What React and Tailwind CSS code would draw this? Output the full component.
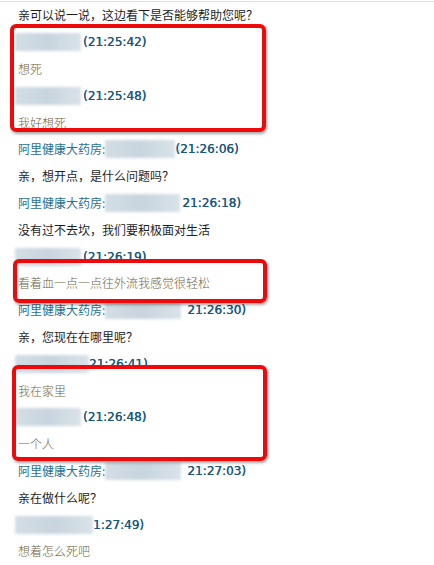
const AGENT = '阿里健康大药房:'

const ROWS = [
  { t: 'agent-msg', text: '亲可以说一说，这边看下是否能够帮助您呢？' },
  { t: 'cust-head', time: '(21:25:42)', blur: 66 },
  { t: 'cust-msg', text: '想死' },
  { t: 'cust-head', time: '(21:25:48)', blur: 66 },
  { t: 'cust-msg', text: '我好想死' },
  { t: 'agent-head', time: '(21:26:06)', blur: 70 },
  { t: 'agent-msg', text: '亲，想开点，是什么问题吗？' },
  { t: 'agent-head', time: '21:26:18)', blur: 75, gap: 2 },
  { t: 'agent-msg', text: '没有过不去坎，我们要积极面对生活' },
  { t: 'cust-head', time: '(21:26:19)', blur: 66 },
  { t: 'cust-msg', text: '看着血一点一点往外流我感觉很轻松' },
  { t: 'agent-head', time: '21:26:30)', blur: 76, gap: 6 },
  { t: 'agent-msg', text: '亲，您现在在哪里呢？' },
  { t: 'cust-head', time: '21:26:41)', blur: 74, gap: 0 },
  { t: 'cust-msg', text: '我在家里' },
  { t: 'cust-head', time: '(21:26:48)', blur: 66 },
  { t: 'cust-msg', text: '一个人' },
  { t: 'agent-head', time: '21:27:03)', blur: 76, gap: 6 },
  { t: 'agent-msg', text: '亲在做什么呢？' },
  { t: 'cust-head', time: '1:27:49)', blur: 78, gap: 0 },
  { t: 'cust-msg', text: '想着怎么死吧' },
]

const sans = "font-['Noto_Sans_CJK_SC',sans-serif]"
const verdana = "font-['DejaVu_Sans',sans-serif]"
const stamp = `text-[12px] text-[#1a587c] ${verdana} [text-shadow:0.35px_0_0_currentColor]`

function Blur({ w }) {
  return (
    <span className="relative inline-block h-[18px] align-middle" style={{ width: w }}>
      <span className="absolute inset-0 bg-gradient-to-r from-[#d3dde4] via-[#c8d5de] to-[#d9e2e8] blur-[1.5px]" />
    </span>
  )
}

function Row({ r }) {
  if (r.t === 'agent-msg') {
    return <div className={`h-[26.8px] flex items-center pl-[18px] text-[12px] text-[#1e1e1e] ${sans}`}>{r.text}</div>
  }
  if (r.t === 'cust-msg') {
    return <div className={`h-[26.8px] flex items-center pl-[18px] text-[12px] text-[#6e6446] ${sans} font-light`}>{r.text}</div>
  }
  if (r.t === 'agent-head') {
    return (
      <div className="h-[26.8px] flex items-center pl-[18px]">
        <span className={`text-[12px] text-[#2a6f93] ${sans}`}>{AGENT}</span>
        <Blur w={r.blur} />
        <span className={stamp} style={{ marginLeft: r.gap ?? 0 }}>{r.time}</span>
      </div>
    )
  }
  return (
    <div className="h-[26.8px] flex items-center pl-[15px]">
      <Blur w={r.blur} />
      <span className={stamp} style={{ marginLeft: r.gap ?? 2 }}>{r.time}</span>
    </div>
  )
}

export default function App() {
  return (
    <div className="relative w-[434px] h-[565px] bg-white overflow-hidden">
      <div className="h-[2px] border-b border-[#e2e2dc]" />
      <div>
        {ROWS.map((r, i) => <Row key={i} r={r} />)}
      </div>
      <div className="absolute left-[10px] top-[24px] w-[256px] h-[108px] rounded-[6px] border-[4px] border-[#ee0a0a] shadow-[1px_2px_3px_rgba(0,0,0,0.35)]" />
      <div className="absolute left-[13px] top-[259px] w-[254px] h-[44px] rounded-[6px] border-[4px] border-[#ee0a0a] shadow-[1px_2px_3px_rgba(0,0,0,0.35)]" />
      <div className="absolute left-[12px] top-[365px] w-[255px] h-[96px] rounded-[6px] border-[4px] border-[#ee0a0a] shadow-[1px_2px_3px_rgba(0,0,0,0.35)]" />
    </div>
  )
}
